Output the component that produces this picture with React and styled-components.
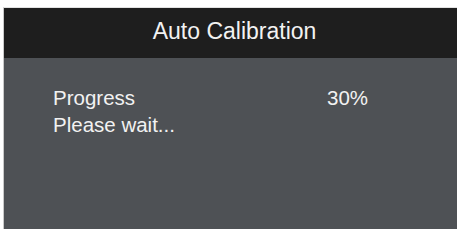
import React from "react";
import styled, { createGlobalStyle } from "styled-components";

const GlobalStyle = createGlobalStyle`
  html, body {
    margin: 0;
    padding: 0;
    background: #ffffff;
    height: 100%;
    overflow: hidden;
  }
  #root {
    height: 100%;
  }
`;

const Page = styled.div`
  height: 100%;
  padding: 7px 5px 0 3px;
  box-sizing: border-box;
  display: flex;
`;

const Screen = styled.div`
  flex: 1;
  display: flex;
  flex-direction: column;
  border-left: 1px solid #c9c9c9;
  border-top: 1px solid #e2e2e2;
  background: #4e5155;
  font-family: "Liberation Sans", Arial, sans-serif;
  color: #f2f2f2;
`;

const Header = styled.div`
  height: 50px;
  background: #1e1e1e;
  display: flex;
  align-items: center;
  justify-content: center;
  padding-left: 8px;
  padding-bottom: 3px;
  box-sizing: border-box;
`;

const Title = styled.h1`
  margin: 0;
  font-size: 23px;
  font-weight: normal;
  line-height: 1;
`;

const Body = styled.div`
  padding: 26px 0 0 49px;
`;

const Row = styled.div`
  display: flex;
  font-size: 20.5px;
  line-height: 27px;
`;

const Label = styled.span`
  width: ${(p) => (p.$wide ? "auto" : "274px")};
`;

const App = () => {
  return (
    <>
      <GlobalStyle />
      <Page>
        <Screen>
          <Header>
            <Title>Auto Calibration</Title>
          </Header>
          <Body>
            <Row>
              <Label>Progress</Label>
              <span>30%</span>
            </Row>
            <Row>
              <Label $wide>Please wait...</Label>
            </Row>
          </Body>
        </Screen>
      </Page>
    </>
  );
};

export default App;
